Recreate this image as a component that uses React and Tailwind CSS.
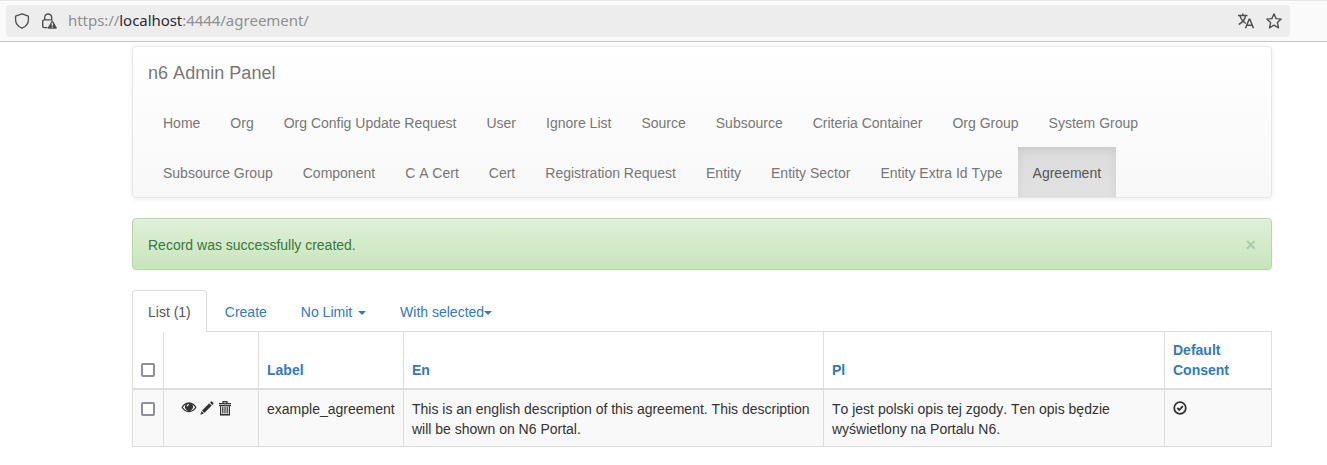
import React from "react";

const NAV_ROWS = [
  ["Home", "Org", "Org Config Update Request", "User", "Ignore List", "Source", "Subsource", "Criteria Container", "Org Group", "System Group"],
  ["Subsource Group", "Component", "C A Cert", "Cert", "Registration Request", "Entity", "Entity Sector", "Entity Extra Id Type", "Agreement"],
];

function ShieldIcon() {
  return (
    <svg className="size-4" viewBox="0 0 16 16" fill="none" stroke="#4f4f53" strokeWidth="1.3" strokeLinejoin="round">
      <path d="M8 .9 14.4 3.2V7C14.4 10.7 11.8 13.6 8 15.2 4.200 13.600 1.600 10.700 1.600 7V3.200Z" />
    </svg>
  );
}

function LockWarningIcon() {
  return (
    <svg className="size-4" viewBox="0 0 16 16" fill="none">
      <path d="M3.700 7V4.500a3.500 3.500 0 0 1 7 0V7M6.500 14.600H3.200A1.500 1.500 0 0 1 1.700 13.100V8.400a1.500 1.500 0 0 1 1.500-1.500h8" stroke="#4f4f53" strokeWidth="1.4" />
      <path d="M10.800 7.700 6.900 14.500q-.5 1.300.8 1.300h7.200q1.300 0 .8-1.300L11.900 7.700q-.55-.8-1.100 0Z" fill="#4f4f53" />
      <path d="M11.300 9.800v3M11.300 13.700v1" stroke="#ededed" strokeWidth="1.200" />
    </svg>
  );
}

function TranslateIcon() {
  return (
    <svg className="size-4" viewBox="0 0 16 16" fill="none" stroke="#4f4f53" strokeWidth="1.5">
      <path d="M0 2.500h9.500M4.800.5v2M2 2.700c.8 3.500 3.100 6 5.800 7.800M7.600 2.700C7 6.500 4.500 9.500.8 11.500" />
      <path d="m7.500 15.200 3.700-9h.6l3.700 9M8.900 12.200h5.200" />
    </svg>
  );
}

function StarIcon() {
  return (
    <svg className="size-4" viewBox="0 0 16 16" fill="none" stroke="#4f4f53" strokeWidth="1.350" strokeLinejoin="round">
      <path d="m8 .9 2.100 4.700 5.100.5-3.800 3.500 1.100 5.200L8 12.200l-4.500 2.600 1.100-5.200L.8 6.100l5.100-.5Z" />
    </svg>
  );
}

function EyeIcon() {
  return (
    <svg className="h-3.5 w-4" viewBox="0 0 16 14">
      <path fill="#333" fillRule="evenodd" d="M8 1.300c3.400 0 6.100 2.300 7.500 5-1.400 2.700-4.100 5-7.500 5S1.900 9 .5 6.300C1.900 3.600 4.600 1.300 8 1.300ZM4.700 3.500C3.500 4.200 2.600 5.100 1.900 6.300c1.300 2.200 3.400 3.700 6.100 3.700s4.800-1.500 6.100-3.700c-.7-1.200-1.600-2.100-2.800-2.800a4 4 0 1 1-6.600 0ZM7.700 3c-1.200.2-2 1.100-2.100 2.200l1.100.3c.1-.8.6-1.300 1.300-1.500Z" />
    </svg>
  );
}

function PencilIcon() {
  return (
    <svg className="size-3.5" viewBox="0 0 14 14" fill="#333">
      <path d="M11 .5q.5-.5 1 0l1.400 1.400q.5.5 0 1l-1 1-2.400-2.400ZM9.300 2.200l2.400 2.400-7.300 7.300L2 9.500ZM1.500 10.100l2.300 2.300L.3 13.700Z" />
    </svg>
  );
}

function TrashIcon() {
  return (
    <svg className="h-[15px] w-3.5" viewBox="0 0 14 15" fill="none" stroke="#333">
      <path d="M5 2V.7h4V2" strokeWidth="1.200" />
      <path d="M1 2.600h12" strokeWidth="1.300" />
      <path d="M1 4.500h12" strokeWidth="1.200" />
      <path d="M2.600 5v8.500h8.800V5M4.800 5.500v7M7 5.500v7M9.200 5.500v7" strokeWidth="1.200" />
      <path d="M2 13.900h10" strokeWidth="1.300" />
    </svg>
  );
}

function OkCircleIcon() {
  return (
    <svg className="size-3.5" viewBox="0 0 14 14" fill="none" stroke="#333">
      <circle cx="7" cy="7" r="5.800" strokeWidth="1.800" />
      <path d="m4.300 6.800 2 2 3.600-3.600" strokeWidth="1.900" />
    </svg>
  );
}

function Checkbox() {
  return <input type="checkbox" className="block size-[14px] appearance-none rounded-[2px] border-2 border-[#8f8f9d] bg-white" />;
}

function Caret() {
  return <span className="inline-block border-x-4 border-t-4 border-x-transparent border-t-[#337ab7] align-middle" />;
}

function AddressBar() {
  return (
    <header className="h-[42px] border-t border-b border-t-[#e6e6e6] border-b-[#c4c4c6] bg-[#fafafa] pt-1 pl-1.5">
      <div className="flex h-8 w-[1284px] items-center rounded bg-[#ededed] pr-2 pl-2">
        <ShieldIcon />
        <div className="ml-[11px]"><LockWarningIcon /></div>
        <div className="-mt-0.5 ml-[11px] font-['Noto_Sans',sans-serif] text-[15px] leading-5 tracking-[-0.05px] whitespace-nowrap text-[#8f8f91]">
          https://<span className="text-[#2b2a33]">localhost</span>:4444/agreement/
        </div>
        <div className="ml-auto flex gap-3">
          <TranslateIcon />
          <StarIcon />
        </div>
      </div>
    </header>
  );
}

function Navbar() {
  return (
    <nav className="h-[152px] rounded border border-[#e7e7e7] bg-linear-to-b from-white to-[#f8f8f8] shadow-[inset_0_1px_0_rgba(255,255,255,0.15),0_1px_5px_rgba(0,0,0,0.075)]">
      <div className="px-[15px] pt-4 pb-3.5 text-lg leading-5 tracking-[0.03px] text-[#777]">n6 Admin Panel</div>
      {NAV_ROWS.map((row, i) => (
        <ul key={i} className="flex pl-[15px]">
          {row.map((item) => (
            <li
              key={item}
              className={
                item === "Agreement"
                  ? "bg-linear-to-b from-[#dbdbdb] to-[#e2e2e2] px-[15px] pt-4 pb-3.5 leading-5 whitespace-nowrap text-[#555] shadow-[inset_0_3px_9px_rgba(0,0,0,0.075)]"
                  : "px-[15px] pt-4 pb-3.5 leading-5 whitespace-nowrap text-[#777]"
              }
            >
              {item}
            </li>
          ))}
        </ul>
      ))}
    </nav>
  );
}

function Tabs() {
  return (
    <ul className="mt-5 flex h-[42px] border-b border-[#ddd] leading-5 text-[#337ab7]">
      <li className="mr-0.5 h-[42px] rounded-t border border-b-0 border-[#ddd] bg-white px-[15px] pt-[11px] text-[#555]">List (1)</li>
      <li className="mr-0.5 px-4 pt-3">Create</li>
      <li className="mr-0.5 px-4 pt-3">No Limit <span className="ml-0.5"><Caret /></span></li>
      <li className="px-4 pt-3">With selected<Caret /></li>
    </ul>
  );
}

const CELL = "border-x border-b border-[#ddd] px-2 pt-[9px] pb-[7px] align-top";
const HEAD = "border-x border-b-2 border-[#ddd] p-2 text-left align-bottom font-bold text-[#337ab7]";

function RecordTable() {
  return (
    <table className="w-[1140px] table-fixed border-collapse leading-5">
      <colgroup>
        <col className="w-[31px]" />
        <col className="w-[95px]" />
        <col className="w-[145px]" />
        <col className="w-[420px]" />
        <col className="w-[341px]" />
        <col />
      </colgroup>
      <thead>
        <tr>
          <th className={HEAD}><div className="pb-[3px]"><Checkbox /></div></th>
          <th className={HEAD}></th>
          <th className={HEAD}>Label</th>
          <th className={HEAD}>En</th>
          <th className={HEAD}>Pl</th>
          <th className={HEAD}>Default<br />Consent</th>
        </tr>
      </thead>
      <tbody>
        <tr className="bg-[#f9f9f9]">
          <td className={CELL}><div className="pt-[3px]"><Checkbox /></div></td>
          <td className={CELL}>
            <div className="flex gap-[3px] pt-0.5 pl-[9px]">
              <EyeIcon />
              <PencilIcon />
              <div className="pl-px"><TrashIcon /></div>
            </div>
          </td>
          <td className={CELL}>example_agreement</td>
          <td className={CELL}>This is an english description of this agreement. This description will be shown on N6 Portal.</td>
          <td className={CELL}>To jest polski opis tej zgody. Ten opis będzie wyświetlony na Portalu N6.</td>
          <td className={CELL}><div className="pt-0.5"><OkCircleIcon /></div></td>
        </tr>
      </tbody>
    </table>
  );
}

export default function App() {
  return (
    <div className="h-[465px] overflow-hidden bg-white font-['Liberation_Sans',Arial,sans-serif] text-sm text-[#333] [font-kerning:none]">
      <AddressBar />
      <main className="ml-[132px] w-[1140px] pt-1">
        <Navbar />
        <div className="mt-5 flex h-[52px] items-center justify-between rounded border border-[#b2dba1] bg-linear-to-b from-[#dff0d8] to-[#c8e5bc] px-[15px] pt-0.5 text-[#3c763d] shadow-[inset_0_1px_0_rgba(255,255,255,0.25),0_1px_2px_rgba(0,0,0,0.05)]">
          <span>Record was successfully created.</span>
          <button className="text-[18px] leading-none font-bold text-[#3c763d] opacity-25">×</button>
        </div>
        <Tabs />
        <RecordTable />
      </main>
    </div>
  );
}
